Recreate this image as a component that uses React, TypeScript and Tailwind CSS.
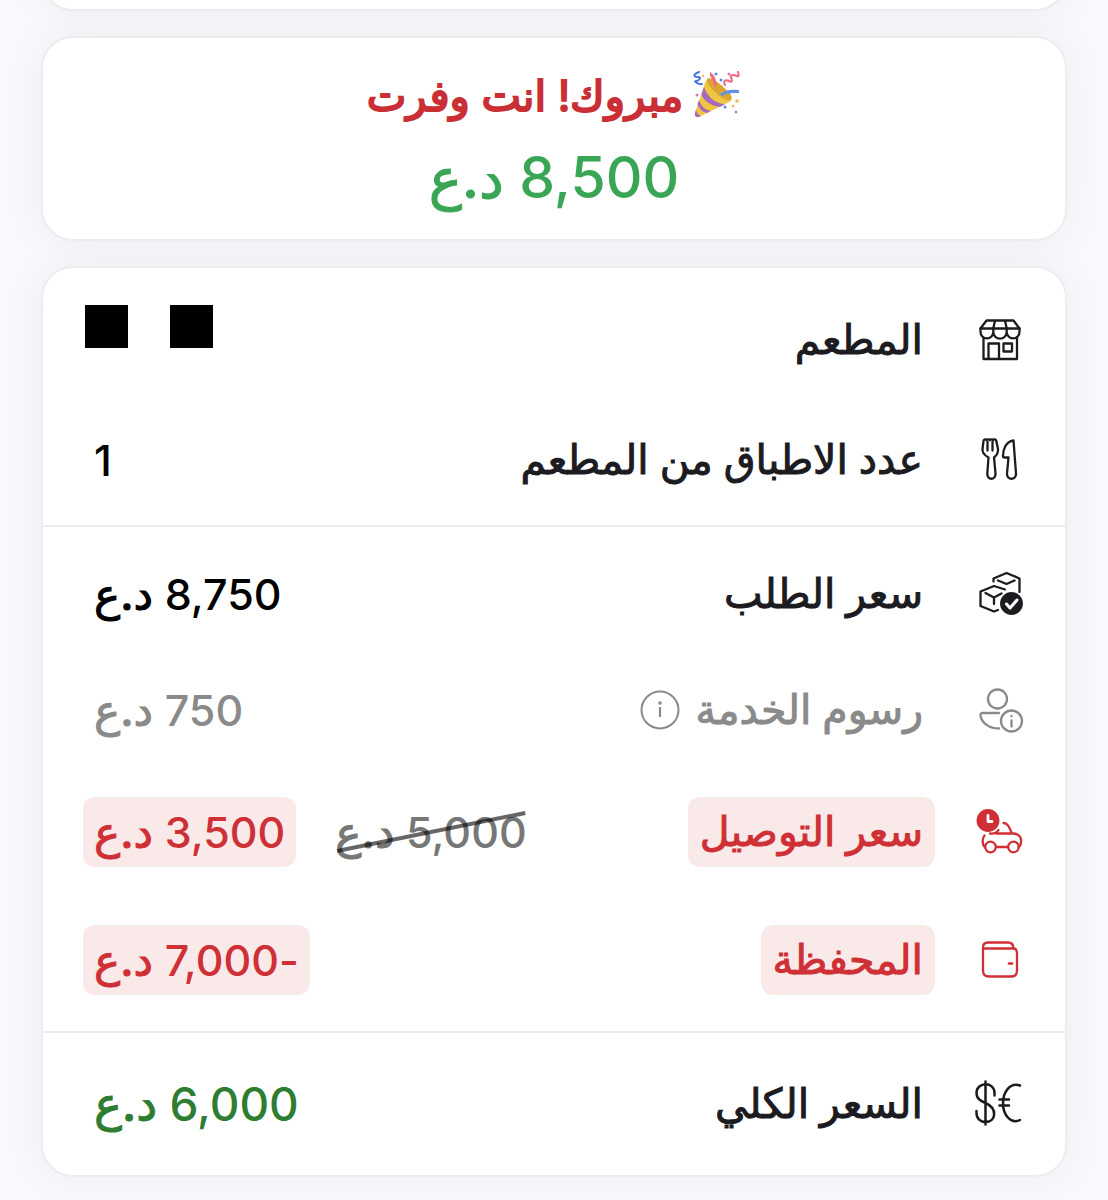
import React from 'react';

interface MoneyProps {
  amount: string;
  unitSize?: string;
}

const Money: React.FC<MoneyProps> = ({ amount, unitSize = 'text-[44px]' }) => (
  <>
    <span>{amount}</span>{' '}
    <span className={`[-webkit-text-stroke:1px_currentColor] ${unitSize}`}>د.ع</span>
  </>
);

interface RowProps {
  icon: React.ReactNode;
  label: React.ReactNode;
  children: React.ReactNode;
  size?: string;
  color?: string;
  valueSize?: string;
  badge?: boolean;
}

const Row: React.FC<RowProps> = ({
  icon,
  label,
  children,
  size = 'h-[116px]',
  color = 'text-[#1c1b1f]',
  valueSize = 'text-[43px]',
  badge = false,
}) => {
  const box = badge ? 'bg-[#fae9e9]' : '';
  return (
    <div className={`flex items-center px-10 ${size} ${color}`}>
      <span className="me-10 flex w-[50px] justify-center">{icon}</span>
      <dt
        className={`flex h-[70px] items-center gap-4 rounded-xl px-3 text-[41px] [-webkit-text-stroke:1px_currentColor] ${box}`}
      >
        {label}
      </dt>
      <dd className={`ms-auto flex items-center gap-7 ${valueSize}`}>{children}</dd>
    </div>
  );
};

const Value: React.FC<{ className?: string; children: React.ReactNode }> = ({
  className = '',
  children,
}) => (
  <span
    className={`block h-[70px] rounded-xl px-[11px] leading-[70px] whitespace-nowrap ${className}`}
  >
    {children}
  </span>
);

const icon = {
  width: 50,
  height: 50,
  viewBox: '0 0 50 50',
  fill: 'none',
  stroke: 'currentColor',
  strokeWidth: 2.3,
  strokeLinecap: 'round' as const,
  strokeLinejoin: 'round' as const,
  'aria-hidden': true,
};

const StoreIcon = () => (
  <svg {...icon}>
    <path d="M5.500 13.500 11.500 5.500h27L44.500 13.500zM20 5.500l-1.700 8M30 5.500l1.700 8" />
    <path d="M5.500 13.500v3.500a6.400 6.400 0 0 0 12.800 0 6.700 6.700 0 0 0 13.400 0 6.400 6.400 0 0 0 12.800 0v-3.500M18.300 13.500v3.500M31.700 13.500v3.500" />
    <path d="M8.500 23v21H42V23M13.500 44V28.500H24V44M28.500 28.500h8.500v8h-8.500z" />
  </svg>
);

const CutleryIcon = () => (
  <svg {...icon}>
    <path d="M8.500 6c.4-2 2.400-2 3.200-.8.800-1.200 2.400-1.200 3.200 0 .8-1.200 2.400-1.200 3.200 0 .8-1.200 2.800-1.200 3.200.8l1.700 8c.5 4-1.500 6.500-4 8.500l1.500 16c.3 7-8.500 7-8.200 0l1.200-16C10 20.500 7 18 7.500 14z" />
    <path d="M12.500 7v8.500M17.500 7v8.500" />
    <path d="M38.500 5.500C31 6.500 28 14 28 21c0 1 .5 1.500 1.500 1.500h4L32 38.500c-.5 7 9.500 7 9 0z" />
  </svg>
);

const BoxesIcon = () => (
  <svg {...icon}>
    <path d="M18.500 12.500V9.500L31.500 4l13 5.500V23M23 11.500l8.500 3.500 8-3.500" />
    <path d="M30 20.500 19 17 5.500 22.500V37L19 42.500l4-1.500M10.500 24l8.500 4.500 7.500-4M19 28.500V35" />
    <circle cx="36.500" cy="34.500" r="10.300" fill="currentColor" />
    <path d="m31.500 35 3.500 4 7-8" stroke="white" strokeWidth="3" />
  </svg>
);

const UserInfoIcon = () => (
  <svg {...icon}>
    <circle cx="22.500" cy="14" r="9.500" />
    <path d="M24 28H8c-2 0-3 1-2.500 3C7 38 14 43.500 24 43.500" />
    <circle cx="36.500" cy="36" r="10.500" />
    <path d="M36.500 35.500v6M36.500 31v.2" />
  </svg>
);

const CarIcon = () => (
  <svg {...icon}>
    <path d="M10 40c-3-2-3-9-.5-11.500M15 26.500c5 .5 7-1 8.500-3.500M21 26.500h17c6 0 8.500 4 8 8.500 0 2-.5 4-2.500 5M21 40h12M28.500 16c4 0 5.500 3.500 8.500 10.500" />
    <circle cx="15.500" cy="40" r="5.300" />
    <circle cx="38.500" cy="40" r="5.300" />
    <circle cx="13" cy="13.500" r="10.300" fill="currentColor" />
    <path d="M13 8.500v6h4" stroke="white" strokeWidth="2.8" />
  </svg>
);

const WalletIcon = () => (
  <svg {...icon}>
    <path d="M8 12.500C8 9 9.500 7.500 13 7.500h20c4 0 5.500 2 5.500 6H9M8 12.500V35.500c0 4 2 6 6 6h22c4 0 6-2 6-6V19c0-3.500-1-5.500-3.500-5.500" />
    <path d="M34 28.500h3" strokeWidth="2.600" />
  </svg>
);

const CurrencyIcon = () => (
  <svg {...icon} strokeWidth="2.500">
    <path d="M10.500 2.500v43M19.500 16.500V14c0-12-18-11.500-18 0 0 6 4.500 8 9 10 12.500 5.500 10.500 19 0 19-5 0-9-3.500-9-9V32" />
    <path d="M45 6.500C35 3 28 13 28 24.500s8 21 17 16.500M24.500 20.500h9.500M24.500 26.500h9.500" />
  </svg>
);

const PartyPopper = () => (
  <svg width="48" height="48" viewBox="0 0 48 48" fill="none" aria-hidden="true">
    <path d="M13 9 2 42c-.5 3 1 5 4 4l32-16C31 26 17 17 13 9Z" fill="#efc63f" />
    <path d="M11 16c3 9 11 17 21 17l-5 3C17 35 9 28 8.500 23zM6 29c2 6 6 10 12 11l-4 2c-5-1-8-5-9.500-9zM3 39c1 3 2 5 5 6-4 2-7 1-6-3z" fill="#a868bd" />
    <path d="M14 8c-3 5 19 25 24 21 3-4-4-10-10-15-5-4-12-9-14-6Z" fill="#dba52f" />
    <path d="M17 1c5 3 7 8 6 16-3-3-3-9-6-12z" fill="#ef6a84" />
    <path d="M27 23c5-4 11-5 19-4v3c-8 0-12 0-17 3z" fill="#5f93ea" />
    <path d="M6 1c-7 3-5 5-1 5s1 4-2 4 3 4 6 3" stroke="#4575e8" strokeWidth="2" strokeLinecap="round" />
    <path d="M32 14c-2-4 0-6 4-4s3-1 2-4 4-2 6-1 2-2 1-4" stroke="#ed6782" strokeWidth="2" strokeLinecap="round" />
    <g fill="#d878a8">
      <circle cx="36" cy="3" r="1.500" />
      <circle cx="4" cy="24" r="1.500" />
      <circle cx="43" cy="41" r="1.500" />
    </g>
    <g fill="#4e91ea">
      <circle cx="23" cy="3" r="1.500" />
      <circle cx="28" cy="9" r="1.500" />
      <circle cx="32" cy="36" r="1.500" />
    </g>
    <g fill="#efbd5d">
      <circle cx="44" cy="30" r="1.800" />
      <circle cx="40" cy="35" r="1.500" />
      <circle cx="10" cy="5" r="1.200" />
    </g>
  </svg>
);

const InfoIcon = () => (
  <svg width="40" height="40" viewBox="0 0 40 40" fill="none" aria-hidden="true">
    <circle cx="20" cy="20" r="18.500" stroke="currentColor" strokeWidth="2" />
    <path d="M20 17v10" stroke="currentColor" strokeWidth="2.200" />
    <circle cx="20" cy="13" r="1.800" fill="currentColor" />
  </svg>
);

const card = 'border-2 border-[#ededee] bg-white shadow-[0_0_40px_rgba(0,0,0,0.05)]';

export default function App() {
  return (
    <main
      dir="rtl"
      lang="ar"
      className="flex min-h-screen flex-col gap-[25px] overflow-hidden bg-[#f8f9fd] px-[41px] pb-6 font-['Inter','DejaVu_Sans',sans-serif] font-medium"
    >
      {/* tail of the previous card, scrolled out at the top */}
      <div className={`-mt-[69px] h-20 rounded-[32px] ${card}`} />

      <section className={`rounded-[32px] pt-7 pb-6 text-center ${card}`}>
        <h2 className="flex h-[58px] items-center justify-center gap-[10px] text-[42px] font-normal text-[#cb2f36]">
          <PartyPopper />
          <span className="[-webkit-text-stroke:2px_currentColor]">مبروك! انت وفرت</span>
        </h2>
        <p className="mt-4 h-[75px] text-[57px] leading-[75px] text-[#3aa655]">
          8,500{' '}
          <span className="text-[56px] [-webkit-text-stroke:1px_currentColor]">د.ع</span>
        </p>
      </section>

      <section className={`rounded-[32px] ${card}`}>
        <dl>
          <div className="border-b-2 border-[#ebebec] pt-3 pb-[5px]">
            <Row icon={<StoreIcon />} label="المطعم" size="h-[120px]">
              <span className="me-[2px] mb-7 flex gap-[42px]">
                <span className="size-[43px] bg-black" />
                <span className="size-[43px] bg-black" />
              </span>
            </Row>
            <Row icon={<CutleryIcon />} label="عدد الاطباق من المطعم" size="h-[120px]">
              <Value className="text-black">1</Value>
            </Row>
          </div>

          <div className="border-b-2 border-[#ebebec] pt-[9px] pb-[7px]">
            <Row icon={<BoxesIcon />} label="سعر الطلب">
              <Value className="text-black">
                <Money amount="8,750" />
              </Value>
            </Row>
            <Row
              icon={<UserInfoIcon />}
              color="text-[#8a8a8a]"
              label={
                <>
                  رسوم الخدمة
                  <button type="button" aria-label="معلومات">
                    <InfoIcon />
                  </button>
                </>
              }
            >
              <Value>
                <Money amount="750" />
              </Value>
            </Row>
            <Row
              icon={<CarIcon />}
              label="سعر التوصيل"
              size="h-[128px]"
              color="text-[#cf3036]"
              badge
            >
              <del className="relative text-[#777777] no-underline">
                <Value>
                  <Money amount="5,000" />
                </Value>
                <svg
                  className="absolute inset-0 size-full text-black/60"
                  viewBox="0 0 212 70"
                  preserveAspectRatio="none"
                  aria-hidden="true"
                >
                  <path d="M13 54 200 16" stroke="currentColor" strokeWidth="4" />
                </svg>
              </del>
              <Value className="bg-[#fae9e9]">
                <Money amount="3,500" />
              </Value>
            </Row>
            <Row
              icon={<WalletIcon />}
              label="المحفظة"
              size="h-[128px]"
              color="text-[#cf3036]"
              badge
            >
              <Value className="bg-[#fae9e9]">
                <Money amount="-7,000" />
              </Value>
            </Row>
          </div>

          <Row
            icon={<CurrencyIcon />}
            label="السعر الكلي"
            size="h-[142px]"
            valueSize="text-[46px]"
          >
            <Value className="text-[#2e7d32]">
              <Money amount="6,000" unitSize="text-[47px]" />
            </Value>
          </Row>
        </dl>
      </section>
    </main>
  );
}
